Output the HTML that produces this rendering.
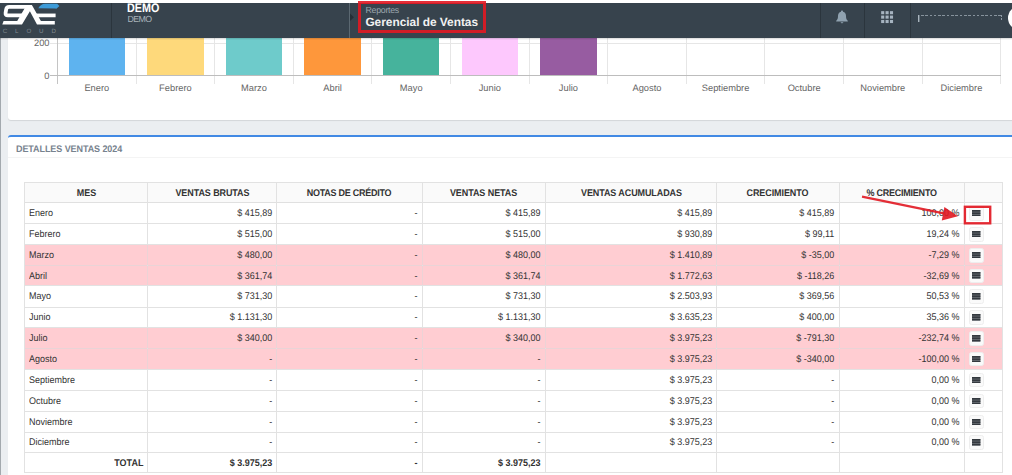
<!DOCTYPE html>
<html lang="es"><head><meta charset="utf-8"><title>Gerencial de Ventas</title>
<style>
*{margin:0;padding:0;box-sizing:border-box}
html,body{text-rendering:geometricPrecision;width:1012px;height:475px;overflow:hidden;background:#ebeef1;font-family:"Liberation Sans",sans-serif;}
.a{position:absolute}
#top{left:0;top:0;width:1012px;height:3px;background:#fff}
#hdr{left:0;top:3px;width:1012px;height:34.5px;background:#37434d;overflow:hidden}
.vd{position:absolute;top:0;width:1px;height:34.5px;background:#2b353d}
#card1{left:8px;top:37.5px;width:1010px;height:82px;background:#fff;border-radius:0 0 3px 3px;box-shadow:0 1px 1px rgba(0,0,0,.1)}
#card2{left:8px;top:135px;width:1010px;height:345px;background:#fff;border-top:2.1px solid #4189e4;border-radius:3px 3px 0 0}
#lstrip{left:0;top:37.5px;width:1.2px;height:440px;background:#a3a9ae}
.gl{position:absolute;background:#e6e6e6}
.bar{position:absolute;top:37.5px;height:38.2px}
.xl{position:absolute;top:82.2px;width:78.6px;text-align:center;font-size:9.3px;line-height:12px;color:#666}
.yl{position:absolute;left:20px;width:29.5px;text-align:right;font-size:9.3px;line-height:12px;color:#666}
#ttl{left:16.2px;top:143.6px;font-size:9.5px;line-height:11px;font-weight:bold;color:#77828e;white-space:nowrap;letter-spacing:-0.08px;transform:scaleX(.947);transform-origin:0 50%}
#tsep{left:8px;top:156.8px;width:1010px;height:1px;background:#f4f4f4}
.c{position:absolute;font-size:9.7px;line-height:11px;color:#333;white-space:nowrap;overflow:visible;transform:scaleX(.928);transform-origin:0 50%}
.r{text-align:right;transform-origin:100% 50%}
.h{text-align:center;font-weight:bold;color:#333;transform-origin:50% 50%}
.b{font-weight:bold}
.hl{position:absolute;height:1px;background:#e2e2e2}
.vl{position:absolute;width:1px;background:#e2e2e2}
.pk{position:absolute;background:#ffcdd2}
.btn{position:absolute;left:969.2px;width:15.3px;height:14.7px;border:1px solid #eee;border-radius:2.5px;background:#fafafa}
.btn svg{position:absolute;left:2.2px;top:2.9px}
</style></head>
<body>
<div id="top" class="a"></div>
<div id="hdr" class="a">
<div class="vd" style="left:111px"></div>
<div class="vd" style="left:349.3px;background:#5b6871"></div>
<div class="vd" style="left:819.5px"></div><div class="vd" style="left:864px"></div><div class="vd" style="left:910px"></div>
<svg class="a" style="left:0;top:0" width="112" height="35" viewBox="0 0 112 35">
<path fill="none" stroke="#fff" stroke-linejoin="round" stroke-width="3.8" d="M28 3.8 H9.2 Q6.6 3.8 6.2 6.2 L5.6 9.8 Q5.2 12.4 7.8 12.4 H22"/>
<path fill="#fff" d="M26.6 1.9 H31.9 L40.9 18.1 H54.8 V21.5 H37 L29.9 8.3 L22 21.5 H2.3 L3.6 18.1 H17.2 Z"/>
<path fill="none" stroke="#fff" stroke-width="3.7" d="M35.4 12.4 H55.6"/>
<path d="M38.3 5.2 Q40.8 0.9 45 0.7 H57.2 L59.4 3 L56.4 5.7 L55 5.5 Z" fill="#3d9bd8"/>
<text x="2.7" y="29.7" font-family="Liberation Sans, sans-serif" font-size="6.2" letter-spacing="7.9" fill="#aeb6bc" fill-opacity=".62">CLOUD</text>
</svg>
<div class="a" style="left:127.4px;top:-1.9px;font-size:12.4px;line-height:14px;font-weight:bold;color:#fff;transform:scaleX(.868);transform-origin:0 0">DEMO</div>
<div class="a" style="left:127.6px;top:10.6px;font-size:8.8px;line-height:11px;color:#a9b3bb;letter-spacing:-0.65px">DEMO</div>
<div class="a" style="left:350px;top:10.4px;width:3.9px;height:7.6px;background:#252e36;clip-path:polygon(0 0,100% 50%,0 100%)"></div>
<div class="a" style="left:365.5px;top:2.3px;font-size:8.8px;line-height:10px;color:#9ba6ae;white-space:nowrap;letter-spacing:-0.28px">Reportes</div>
<div class="a" style="left:365.4px;top:11.6px;font-size:11.9px;line-height:15px;font-weight:bold;color:#f1f1f1;white-space:nowrap;letter-spacing:-0.02px">Gerencial de Ventas</div>
<svg class="a" style="left:835.2px;top:6.9px" width="14" height="14" viewBox="0 0 14 14"><path fill="#90a2b0" d="M7 .4c.6 0 1 .4 1 1v.4c2 .5 3 2.200 3 4.200 0 2.500.6 3.700 1.800 4.700v.8H1.200v-.8C2.400 9.700 3 8.500 3 6c0-2 1-3.700 3-4.200v-.4c0-.6.4-1 1-1zM5.700 12.200h2.600c0 .65-.55 1.100-1.300 1.100s-1.300-.45-1.300-1.100z"/></svg>
<svg class="a" style="left:880.5px;top:7.8px" width="13" height="13" viewBox="0 0 13 13"><g fill="#a6b4c0"><rect x="0.15" y="0.15" width="3.1" height="3.1"/><rect x="4.55" y="0.15" width="3.1" height="3.1"/><rect x="8.95" y="0.15" width="3.1" height="3.1"/><rect x="0.15" y="4.55" width="3.1" height="3.1"/><rect x="4.55" y="4.55" width="3.1" height="3.1"/><rect x="8.95" y="4.55" width="3.1" height="3.1"/><rect x="0.15" y="8.95" width="3.1" height="3.1"/><rect x="4.55" y="8.95" width="3.1" height="3.1"/><rect x="8.95" y="8.95" width="3.1" height="3.1"/></g></svg>
<div class="a" style="left:921px;top:12px;width:80px;height:1.2px;background:repeating-linear-gradient(to right,#87939d 0,#87939d 2.6px,transparent 2.6px,transparent 4.3px)"></div>
<div class="a" style="left:918.3px;top:12px;width:2.2px;height:7px;background:linear-gradient(to right,#a9b4bd 0,#a9b4bd 1.2px,#66737d 1.2px)"></div>
<div class="a" style="left:1000.6px;top:12px;width:1.2px;height:7px;background:repeating-linear-gradient(to bottom,#8d99a3 0,#8d99a3 2px,transparent 2px,transparent 3.4px)"></div>
<div class="a" style="left:1008px;top:3.2px;width:24px;height:24px;border-radius:50%;background:#fff"></div>
</div>
<div class="a" style="left:357.6px;top:0.6px;width:128.6px;height:32.8px;border:3px solid rgba(226,24,34,.9)"></div>
<div id="lstrip" class="a"></div>
<div id="card1" class="a"></div>
<div class="gl" style="left:49.5px;top:43.1px;width:951.7px;height:1px"></div>
<div class="gl" style="left:57.0px;top:37.5px;width:1px;height:46px;background:#c4c4c4"></div>
<div class="gl" style="left:135.6px;top:37.5px;width:1px;height:46px;background:#e6e6e6"></div>
<div class="gl" style="left:214.2px;top:37.5px;width:1px;height:46px;background:#e6e6e6"></div>
<div class="gl" style="left:292.8px;top:37.5px;width:1px;height:46px;background:#e6e6e6"></div>
<div class="gl" style="left:371.4px;top:37.5px;width:1px;height:46px;background:#e6e6e6"></div>
<div class="gl" style="left:450.0px;top:37.5px;width:1px;height:46px;background:#e6e6e6"></div>
<div class="gl" style="left:528.6px;top:37.5px;width:1px;height:46px;background:#e6e6e6"></div>
<div class="gl" style="left:607.2px;top:37.5px;width:1px;height:46px;background:#e6e6e6"></div>
<div class="gl" style="left:685.8px;top:37.5px;width:1px;height:46px;background:#e6e6e6"></div>
<div class="gl" style="left:764.4px;top:37.5px;width:1px;height:46px;background:#e6e6e6"></div>
<div class="gl" style="left:843.0px;top:37.5px;width:1px;height:46px;background:#e6e6e6"></div>
<div class="gl" style="left:921.6px;top:37.5px;width:1px;height:46px;background:#e6e6e6"></div>
<div class="gl" style="left:1000.2px;top:37.5px;width:1px;height:46px;background:#e6e6e6"></div>
<div class="bar" style="left:68.5px;width:56.6px;background:#5eb3ef"></div>
<div class="bar" style="left:147.1px;width:56.6px;background:#fed97b"></div>
<div class="bar" style="left:225.7px;width:56.6px;background:#6ecbcb"></div>
<div class="bar" style="left:304.3px;width:56.6px;background:#fe973b"></div>
<div class="bar" style="left:382.9px;width:56.6px;background:#46b39c"></div>
<div class="bar" style="left:461.5px;width:56.6px;background:#fdc8fd"></div>
<div class="bar" style="left:540.1px;width:56.6px;background:#975ca1"></div>
<div class="gl" style="left:49.5px;top:75.3px;width:951.7px;height:1px;background:#bdbdbd"></div>
<div class="yl" style="top:37.3px">200</div><div class="yl" style="top:69.6px">0</div>
<div class="xl" style="left:57.5px">Enero</div>
<div class="xl" style="left:136.1px">Febrero</div>
<div class="xl" style="left:214.7px">Marzo</div>
<div class="xl" style="left:293.3px">Abril</div>
<div class="xl" style="left:371.9px">Mayo</div>
<div class="xl" style="left:450.5px">Junio</div>
<div class="xl" style="left:529.1px">Julio</div>
<div class="xl" style="left:607.7px">Agosto</div>
<div class="xl" style="left:686.3px">Septiembre</div>
<div class="xl" style="left:764.9px">Octubre</div>
<div class="xl" style="left:843.5px">Noviembre</div>
<div class="xl" style="left:922.1px">Diciembre</div>
<div id="card2" class="a"></div>
<div id="ttl" class="a">DETALLES VENTAS 2024</div>
<div id="tsep" class="a"></div>
<div class="a" style="left:24.5px;top:182.3px;width:977.5px;height:20.3px;background:#fafafa"></div>
<div class="pk" style="left:24.5px;top:245.2px;width:978.0px;height:20.6px"></div>
<div class="pk" style="left:24.5px;top:265.8px;width:978.0px;height:20.5px"></div>
<div class="pk" style="left:24.5px;top:328.4px;width:978.0px;height:20.6px"></div>
<div class="pk" style="left:24.5px;top:349.0px;width:978.0px;height:20.8px"></div>
<div class="hl" style="left:24.0px;top:181.8px;width:978.5px"></div>
<div class="hl" style="left:24.0px;top:201.7px;width:978.5px;height:1.6px;background:#e0e0e0"></div>
<div class="hl" style="left:24.0px;top:222.9px;width:978.5px"></div>
<div class="hl" style="left:24.0px;top:244.2px;width:978.5px"></div>
<div class="hl" style="left:24.0px;top:264.8px;width:978.5px;background:#e9d4d7"></div>
<div class="hl" style="left:24.0px;top:285.3px;width:978.5px"></div>
<div class="hl" style="left:24.0px;top:306.5px;width:978.5px"></div>
<div class="hl" style="left:24.0px;top:327.4px;width:978.5px"></div>
<div class="hl" style="left:24.0px;top:348.0px;width:978.5px;background:#e9d4d7"></div>
<div class="hl" style="left:24.0px;top:368.8px;width:978.5px"></div>
<div class="hl" style="left:24.0px;top:389.8px;width:978.5px"></div>
<div class="hl" style="left:24.0px;top:410.7px;width:978.5px"></div>
<div class="hl" style="left:24.0px;top:431.8px;width:978.5px"></div>
<div class="hl" style="left:24.0px;top:452.1px;width:978.5px"></div>
<div class="hl" style="left:24.0px;top:471.8px;width:978.5px"></div>
<div class="vl" style="left:24.0px;top:181.8px;height:291.0px"></div>
<div class="vl" style="left:147.0px;top:181.8px;height:291.0px"></div>
<div class="vl" style="left:275.9px;top:181.8px;height:291.0px"></div>
<div class="vl" style="left:421.9px;top:181.8px;height:291.0px"></div>
<div class="vl" style="left:545.0px;top:181.8px;height:291.0px"></div>
<div class="vl" style="left:715.9px;top:181.8px;height:291.0px"></div>
<div class="vl" style="left:838.8px;top:181.8px;height:291.0px"></div>
<div class="vl" style="left:964.0px;top:181.8px;height:291.0px"></div>
<div class="vl" style="left:1001.5px;top:181.8px;height:291.0px"></div>
<div class="vl" style="left:147.0px;top:245.2px;height:19.6px;background:#ecd3d6"></div>
<div class="vl" style="left:275.9px;top:245.2px;height:19.6px;background:#ecd3d6"></div>
<div class="vl" style="left:421.9px;top:245.2px;height:19.6px;background:#ecd3d6"></div>
<div class="vl" style="left:545.0px;top:245.2px;height:19.6px;background:#ecd3d6"></div>
<div class="vl" style="left:715.9px;top:245.2px;height:19.6px;background:#ecd3d6"></div>
<div class="vl" style="left:838.8px;top:245.2px;height:19.6px;background:#ecd3d6"></div>
<div class="vl" style="left:964.0px;top:245.2px;height:19.6px;background:#ecd3d6"></div>
<div class="vl" style="left:147.0px;top:265.8px;height:19.5px;background:#ecd3d6"></div>
<div class="vl" style="left:275.9px;top:265.8px;height:19.5px;background:#ecd3d6"></div>
<div class="vl" style="left:421.9px;top:265.8px;height:19.5px;background:#ecd3d6"></div>
<div class="vl" style="left:545.0px;top:265.8px;height:19.5px;background:#ecd3d6"></div>
<div class="vl" style="left:715.9px;top:265.8px;height:19.5px;background:#ecd3d6"></div>
<div class="vl" style="left:838.8px;top:265.8px;height:19.5px;background:#ecd3d6"></div>
<div class="vl" style="left:964.0px;top:265.8px;height:19.5px;background:#ecd3d6"></div>
<div class="vl" style="left:147.0px;top:328.4px;height:19.6px;background:#ecd3d6"></div>
<div class="vl" style="left:275.9px;top:328.4px;height:19.6px;background:#ecd3d6"></div>
<div class="vl" style="left:421.9px;top:328.4px;height:19.6px;background:#ecd3d6"></div>
<div class="vl" style="left:545.0px;top:328.4px;height:19.6px;background:#ecd3d6"></div>
<div class="vl" style="left:715.9px;top:328.4px;height:19.6px;background:#ecd3d6"></div>
<div class="vl" style="left:838.8px;top:328.4px;height:19.6px;background:#ecd3d6"></div>
<div class="vl" style="left:964.0px;top:328.4px;height:19.6px;background:#ecd3d6"></div>
<div class="vl" style="left:147.0px;top:349.0px;height:19.8px;background:#ecd3d6"></div>
<div class="vl" style="left:275.9px;top:349.0px;height:19.8px;background:#ecd3d6"></div>
<div class="vl" style="left:421.9px;top:349.0px;height:19.8px;background:#ecd3d6"></div>
<div class="vl" style="left:545.0px;top:349.0px;height:19.8px;background:#ecd3d6"></div>
<div class="vl" style="left:715.9px;top:349.0px;height:19.8px;background:#ecd3d6"></div>
<div class="vl" style="left:838.8px;top:349.0px;height:19.8px;background:#ecd3d6"></div>
<div class="vl" style="left:964.0px;top:349.0px;height:19.8px;background:#ecd3d6"></div>
<div class="c h" style="left:24.5px;top:187.6px;width:123.0px;letter-spacing:0.00px">MES</div>
<div class="c h" style="left:147.5px;top:187.6px;width:128.9px;letter-spacing:-0.09px">VENTAS BRUTAS</div>
<div class="c h" style="left:276.4px;top:187.6px;width:146.0px;letter-spacing:-0.27px">NOTAS DE CRÉDITO</div>
<div class="c h" style="left:422.4px;top:187.6px;width:123.1px;letter-spacing:-0.08px">VENTAS NETAS</div>
<div class="c h" style="left:545.5px;top:187.6px;width:170.9px;letter-spacing:-0.10px">VENTAS ACUMULADAS</div>
<div class="c h" style="left:716.4px;top:187.6px;width:122.9px;letter-spacing:-0.09px">CRECIMIENTO</div>
<div class="c h" style="left:839.3px;top:187.6px;width:125.2px;letter-spacing:-0.24px">% CRECIMIENTO</div>
<div class="c" style="left:29.1px;top:207.9px">Enero</div>
<div class="c r" style="left:147.5px;top:207.9px;width:124.3px">$ 415,89</div>
<div class="c r" style="left:276.4px;top:207.9px;width:141.4px">-</div>
<div class="c r" style="left:422.4px;top:207.9px;width:118.5px">$ 415,89</div>
<div class="c r" style="left:545.5px;top:207.9px;width:166.3px">$ 415,89</div>
<div class="c r" style="left:716.4px;top:207.9px;width:118.3px">$ 415,89</div>
<div class="c r" style="left:839.3px;top:207.9px;width:120.6px">100,00 %</div>
<div class="btn" style="top:206.0px"><svg width="8.4" height="6.6" viewBox="0 0 8.4 6.6"><rect width="8.4" height="6.5" fill="#74787d"/><rect width="8.4" height="1.7" fill="#34393f"/><rect y="2.4" width="8.4" height="1.7" fill="#34393f"/><rect y="4.8" width="8.4" height="1.7" fill="#34393f"/></svg></div>
<div class="c" style="left:29.1px;top:229.0px">Febrero</div>
<div class="c r" style="left:147.5px;top:229.0px;width:124.3px">$ 515,00</div>
<div class="c r" style="left:276.4px;top:229.0px;width:141.4px">-</div>
<div class="c r" style="left:422.4px;top:229.0px;width:118.5px">$ 515,00</div>
<div class="c r" style="left:545.5px;top:229.0px;width:166.3px">$ 930,89</div>
<div class="c r" style="left:716.4px;top:229.0px;width:118.3px">$ 99,11</div>
<div class="c r" style="left:839.3px;top:229.0px;width:120.6px">19,24 %</div>
<div class="btn" style="top:227.0px"><svg width="8.4" height="6.6" viewBox="0 0 8.4 6.6"><rect width="8.4" height="6.5" fill="#74787d"/><rect width="8.4" height="1.7" fill="#34393f"/><rect y="2.4" width="8.4" height="1.7" fill="#34393f"/><rect y="4.8" width="8.4" height="1.7" fill="#34393f"/></svg></div>
<div class="c" style="left:29.1px;top:249.9px">Marzo</div>
<div class="c r" style="left:147.5px;top:249.9px;width:124.3px">$ 480,00</div>
<div class="c r" style="left:276.4px;top:249.9px;width:141.4px">-</div>
<div class="c r" style="left:422.4px;top:249.9px;width:118.5px">$ 480,00</div>
<div class="c r" style="left:545.5px;top:249.9px;width:166.3px">$ 1.410,89</div>
<div class="c r" style="left:716.4px;top:249.9px;width:118.3px">$ -35,00</div>
<div class="c r" style="left:839.3px;top:249.9px;width:120.6px">-7,29 %</div>
<div class="btn" style="top:248.0px"><svg width="8.4" height="6.6" viewBox="0 0 8.4 6.6"><rect width="8.4" height="6.5" fill="#74787d"/><rect width="8.4" height="1.7" fill="#34393f"/><rect y="2.4" width="8.4" height="1.7" fill="#34393f"/><rect y="4.8" width="8.4" height="1.7" fill="#34393f"/></svg></div>
<div class="c" style="left:29.1px;top:270.5px">Abril</div>
<div class="c r" style="left:147.5px;top:270.5px;width:124.3px">$ 361,74</div>
<div class="c r" style="left:276.4px;top:270.5px;width:141.4px">-</div>
<div class="c r" style="left:422.4px;top:270.5px;width:118.5px">$ 361,74</div>
<div class="c r" style="left:545.5px;top:270.5px;width:166.3px">$ 1.772,63</div>
<div class="c r" style="left:716.4px;top:270.5px;width:118.3px">$ -118,26</div>
<div class="c r" style="left:839.3px;top:270.5px;width:120.6px">-32,69 %</div>
<div class="btn" style="top:268.5px"><svg width="8.4" height="6.6" viewBox="0 0 8.4 6.6"><rect width="8.4" height="6.5" fill="#74787d"/><rect width="8.4" height="1.7" fill="#34393f"/><rect y="2.4" width="8.4" height="1.7" fill="#34393f"/><rect y="4.8" width="8.4" height="1.7" fill="#34393f"/></svg></div>
<div class="c" style="left:29.1px;top:291.3px">Mayo</div>
<div class="c r" style="left:147.5px;top:291.3px;width:124.3px">$ 731,30</div>
<div class="c r" style="left:276.4px;top:291.3px;width:141.4px">-</div>
<div class="c r" style="left:422.4px;top:291.3px;width:118.5px">$ 731,30</div>
<div class="c r" style="left:545.5px;top:291.3px;width:166.3px">$ 2.503,93</div>
<div class="c r" style="left:716.4px;top:291.3px;width:118.3px">$ 369,56</div>
<div class="c r" style="left:839.3px;top:291.3px;width:120.6px">50,53 %</div>
<div class="btn" style="top:289.3px"><svg width="8.4" height="6.6" viewBox="0 0 8.4 6.6"><rect width="8.4" height="6.5" fill="#74787d"/><rect width="8.4" height="1.7" fill="#34393f"/><rect y="2.4" width="8.4" height="1.7" fill="#34393f"/><rect y="4.8" width="8.4" height="1.7" fill="#34393f"/></svg></div>
<div class="c" style="left:29.1px;top:312.4px">Junio</div>
<div class="c r" style="left:147.5px;top:312.4px;width:124.3px">$ 1.131,30</div>
<div class="c r" style="left:276.4px;top:312.4px;width:141.4px">-</div>
<div class="c r" style="left:422.4px;top:312.4px;width:118.5px">$ 1.131,30</div>
<div class="c r" style="left:545.5px;top:312.4px;width:166.3px">$ 3.635,23</div>
<div class="c r" style="left:716.4px;top:312.4px;width:118.3px">$ 400,00</div>
<div class="c r" style="left:839.3px;top:312.4px;width:120.6px">35,36 %</div>
<div class="btn" style="top:310.4px"><svg width="8.4" height="6.6" viewBox="0 0 8.4 6.6"><rect width="8.4" height="6.5" fill="#74787d"/><rect width="8.4" height="1.7" fill="#34393f"/><rect y="2.4" width="8.4" height="1.7" fill="#34393f"/><rect y="4.8" width="8.4" height="1.7" fill="#34393f"/></svg></div>
<div class="c" style="left:29.1px;top:333.1px">Julio</div>
<div class="c r" style="left:147.5px;top:333.1px;width:124.3px">$ 340,00</div>
<div class="c r" style="left:276.4px;top:333.1px;width:141.4px">-</div>
<div class="c r" style="left:422.4px;top:333.1px;width:118.5px">$ 340,00</div>
<div class="c r" style="left:545.5px;top:333.1px;width:166.3px">$ 3.975,23</div>
<div class="c r" style="left:716.4px;top:333.1px;width:118.3px">$ -791,30</div>
<div class="c r" style="left:839.3px;top:333.1px;width:120.6px">-232,74 %</div>
<div class="btn" style="top:331.1px"><svg width="8.4" height="6.6" viewBox="0 0 8.4 6.6"><rect width="8.4" height="6.5" fill="#74787d"/><rect width="8.4" height="1.7" fill="#34393f"/><rect y="2.4" width="8.4" height="1.7" fill="#34393f"/><rect y="4.8" width="8.4" height="1.7" fill="#34393f"/></svg></div>
<div class="c" style="left:29.1px;top:353.8px">Agosto</div>
<div class="c r" style="left:147.5px;top:353.8px;width:124.3px">-</div>
<div class="c r" style="left:276.4px;top:353.8px;width:141.4px">-</div>
<div class="c r" style="left:422.4px;top:353.8px;width:118.5px">-</div>
<div class="c r" style="left:545.5px;top:353.8px;width:166.3px">$ 3.975,23</div>
<div class="c r" style="left:716.4px;top:353.8px;width:118.3px">$ -340,00</div>
<div class="c r" style="left:839.3px;top:353.8px;width:120.6px">-100,00 %</div>
<div class="btn" style="top:351.8px"><svg width="8.4" height="6.6" viewBox="0 0 8.4 6.6"><rect width="8.4" height="6.5" fill="#74787d"/><rect width="8.4" height="1.7" fill="#34393f"/><rect y="2.4" width="8.4" height="1.7" fill="#34393f"/><rect y="4.8" width="8.4" height="1.7" fill="#34393f"/></svg></div>
<div class="c" style="left:29.1px;top:374.7px">Septiembre</div>
<div class="c r" style="left:147.5px;top:374.7px;width:124.3px">-</div>
<div class="c r" style="left:276.4px;top:374.7px;width:141.4px">-</div>
<div class="c r" style="left:422.4px;top:374.7px;width:118.5px">-</div>
<div class="c r" style="left:545.5px;top:374.7px;width:166.3px">$ 3.975,23</div>
<div class="c r" style="left:716.4px;top:374.7px;width:118.3px">-</div>
<div class="c r" style="left:839.3px;top:374.7px;width:120.6px">0,00 %</div>
<div class="btn" style="top:372.8px"><svg width="8.4" height="6.6" viewBox="0 0 8.4 6.6"><rect width="8.4" height="6.5" fill="#74787d"/><rect width="8.4" height="1.7" fill="#34393f"/><rect y="2.4" width="8.4" height="1.7" fill="#34393f"/><rect y="4.8" width="8.4" height="1.7" fill="#34393f"/></svg></div>
<div class="c" style="left:29.1px;top:395.7px">Octubre</div>
<div class="c r" style="left:147.5px;top:395.7px;width:124.3px">-</div>
<div class="c r" style="left:276.4px;top:395.7px;width:141.4px">-</div>
<div class="c r" style="left:422.4px;top:395.7px;width:118.5px">-</div>
<div class="c r" style="left:545.5px;top:395.7px;width:166.3px">$ 3.975,23</div>
<div class="c r" style="left:716.4px;top:395.7px;width:118.3px">-</div>
<div class="c r" style="left:839.3px;top:395.7px;width:120.6px">0,00 %</div>
<div class="btn" style="top:393.7px"><svg width="8.4" height="6.6" viewBox="0 0 8.4 6.6"><rect width="8.4" height="6.5" fill="#74787d"/><rect width="8.4" height="1.7" fill="#34393f"/><rect y="2.4" width="8.4" height="1.7" fill="#34393f"/><rect y="4.8" width="8.4" height="1.7" fill="#34393f"/></svg></div>
<div class="c" style="left:29.1px;top:416.7px">Noviembre</div>
<div class="c r" style="left:147.5px;top:416.7px;width:124.3px">-</div>
<div class="c r" style="left:276.4px;top:416.7px;width:141.4px">-</div>
<div class="c r" style="left:422.4px;top:416.7px;width:118.5px">-</div>
<div class="c r" style="left:545.5px;top:416.7px;width:166.3px">$ 3.975,23</div>
<div class="c r" style="left:716.4px;top:416.7px;width:118.3px">-</div>
<div class="c r" style="left:839.3px;top:416.7px;width:120.6px">0,00 %</div>
<div class="btn" style="top:414.7px"><svg width="8.4" height="6.6" viewBox="0 0 8.4 6.6"><rect width="8.4" height="6.5" fill="#74787d"/><rect width="8.4" height="1.7" fill="#34393f"/><rect y="2.4" width="8.4" height="1.7" fill="#34393f"/><rect y="4.8" width="8.4" height="1.7" fill="#34393f"/></svg></div>
<div class="c" style="left:29.1px;top:437.4px">Diciembre</div>
<div class="c r" style="left:147.5px;top:437.4px;width:124.3px">-</div>
<div class="c r" style="left:276.4px;top:437.4px;width:141.4px">-</div>
<div class="c r" style="left:422.4px;top:437.4px;width:118.5px">-</div>
<div class="c r" style="left:545.5px;top:437.4px;width:166.3px">$ 3.975,23</div>
<div class="c r" style="left:716.4px;top:437.4px;width:118.3px">-</div>
<div class="c r" style="left:839.3px;top:437.4px;width:120.6px">0,00 %</div>
<div class="btn" style="top:435.4px"><svg width="8.4" height="6.6" viewBox="0 0 8.4 6.6"><rect width="8.4" height="6.5" fill="#74787d"/><rect width="8.4" height="1.7" fill="#34393f"/><rect y="2.4" width="8.4" height="1.7" fill="#34393f"/><rect y="4.8" width="8.4" height="1.7" fill="#34393f"/></svg></div>
<div class="c r b" style="left:24.5px;top:457.6px;width:118.4px">TOTAL</div>
<div class="c r b" style="left:147.5px;top:457.6px;width:124.3px">$ 3.975,23</div>
<div class="c r b" style="left:276.4px;top:457.6px;width:141.4px">-</div>
<div class="c r b" style="left:422.4px;top:457.6px;width:118.5px">$ 3.975,23</div>
<div class="a" style="left:0;top:37.5px;width:1012px;height:2.2px;background:linear-gradient(to bottom,rgba(0,0,0,.16),rgba(0,0,0,0))"></div>
<svg class="a" style="left:0;top:0;pointer-events:none" width="1012" height="475" viewBox="0 0 1012 475">
<g fill="#e21822" stroke="#e21822" opacity=".9"><line x1="862" y1="196.6" x2="945" y2="213.6" stroke-width="2.1"/>
<polygon points="944.4,206.9 957.9,216.3 941.8,220.5" stroke="none"/></g>
<rect x="964.9" y="206.8" width="25.3" height="16.5" fill="none" stroke="#e21822" stroke-opacity=".92" stroke-width="2.4"/>
</svg>
</body></html>
